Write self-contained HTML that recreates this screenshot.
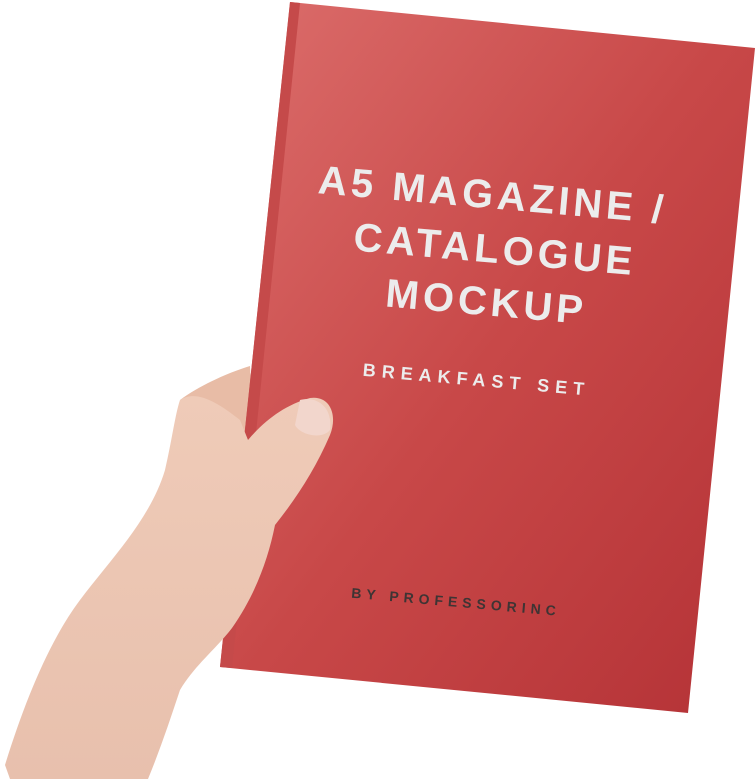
<!DOCTYPE html>
<html><head><style>
html,body{margin:0;padding:0;background:#fff;width:755px;height:779px;overflow:hidden}
svg{display:block}
text{font-family:"Liberation Sans","DejaVu Sans",sans-serif;font-weight:bold}
</style></head><body>
<svg width="755" height="779" viewBox="0 0 755 779" xmlns="http://www.w3.org/2000/svg">
<defs>
<linearGradient id="pg" x1="0" y1="0" x2="1" y2="1">
<stop offset="0" stop-color="#dc6e6c"/>
<stop offset="0.5" stop-color="#c84848"/>
<stop offset="1" stop-color="#b43236"/>
</linearGradient>
<linearGradient id="sk" x1="0" y1="0" x2="0" y2="1">
<stop offset="0" stop-color="#efcbb8"/>
<stop offset="1" stop-color="#e8c0ad"/>
</linearGradient>
</defs>
<path d="M180,400 C200,385 230,372 250,366 L255,460 C230,470 200,440 180,400 Z" fill="#e8bca6"/>
<polygon points="290,2 755,48 688,713 220,667" fill="url(#pg)"/>
<polygon points="290,2 300,3 232,668 220,667" fill="#c54a4a"/>
<path d="M5,765 C25,700 50,640 80,600 C110,560 150,520 165,470 C172,440 175,415 180,400 C195,390 215,400 240,420 L248,440 C265,420 285,405 310,398 C330,395 338,415 330,435 C315,470 295,500 275,525 C268,560 255,595 232,628 C215,650 195,665 180,690 C170,720 160,750 148,779 L10,779 Z" fill="url(#sk)"/>
<path d="M300,400 C315,396 333,405 330,430 C322,440 300,435 295,425 Z" fill="#f2d6cc"/>
<g transform="rotate(5 485 260)" fill="#ececec" text-anchor="middle">
<text x="487" y="208" font-size="40" letter-spacing="4">A5 MAGAZINE /</text>
<text x="494" y="262" font-size="40" letter-spacing="4">CATALOGUE</text>
<text x="490" y="315" font-size="40" letter-spacing="4">MOCKUP</text>
<text x="487" y="386" font-size="18" letter-spacing="6">BREAKFAST SET</text>
<text x="486" y="608" font-size="14" letter-spacing="5" fill="#3e3434">BY PROFESSORINC</text>
</g>
</svg>
</body></html>
